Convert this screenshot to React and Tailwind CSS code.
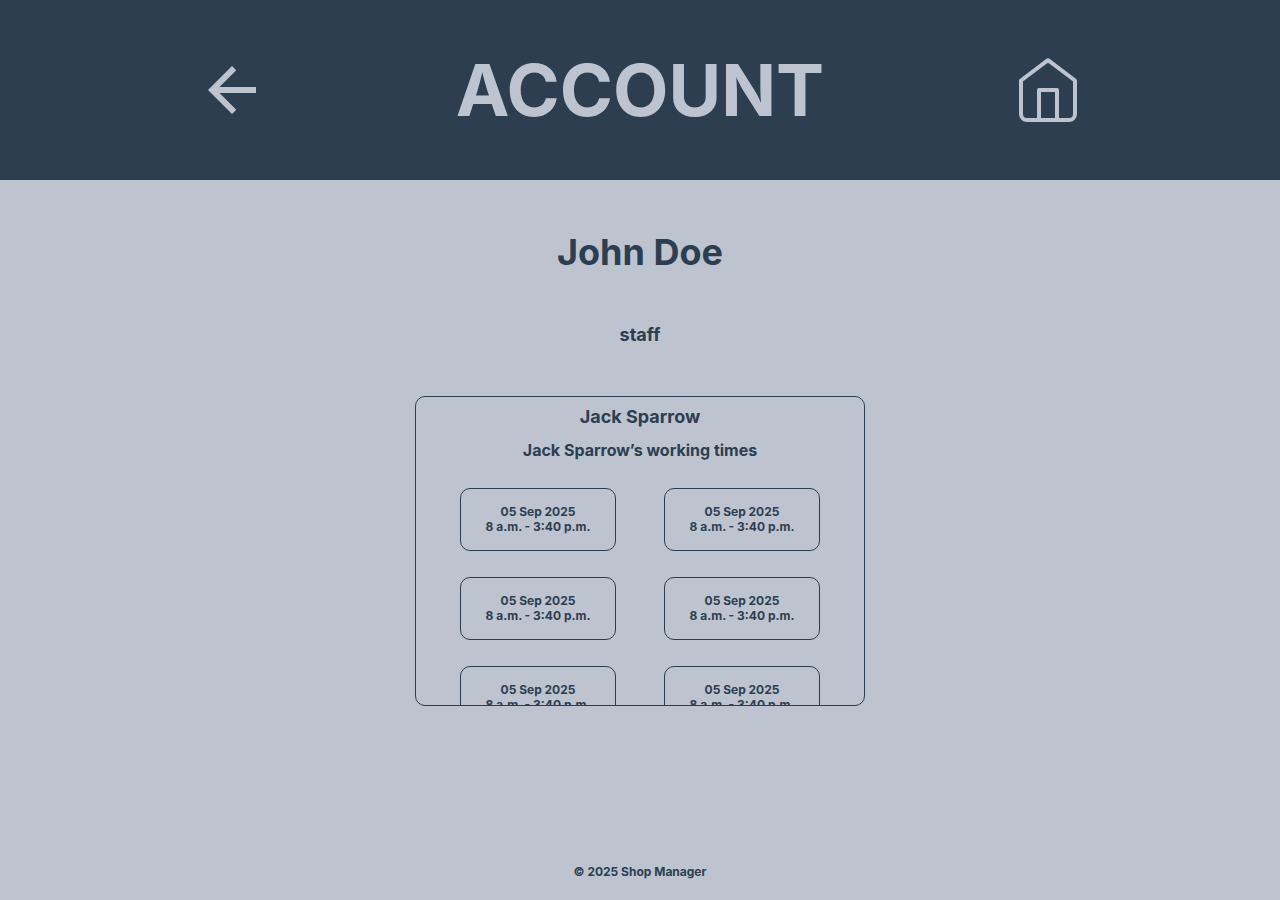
const shifts = Array.from({ length: 8 }, (_, id) => ({
  id,
  date: "05 Sep 2025",
  hours: "8 a.m. - 3:40 p.m.",
}));

function BackIcon() {
  return (
    <svg className="size-12" viewBox="0 0 48 48" fill="currentColor" aria-hidden="true">
      <path d="M48 21H11.5L28.25 4.25L24 0L0 24L24 48L28.25 43.75L11.5 27H48V21Z" />
    </svg>
  );
}

function HomeIcon() {
  return (
    <svg className="h-16 w-15" viewBox="0 0 60 64" fill="none" stroke="currentColor" strokeWidth="4" aria-hidden="true">
      <path
        d="M3 22.5L30 2.2L57 22.5V56A6 6 0 0 1 51 62H9A6 6 0 0 1 3 56Z"
        strokeLinejoin="round"
      />
      <path d="M21 62V32H39V62" strokeLinejoin="round" />
    </svg>
  );
}

function Header() {
  return (
    <header className="grid h-45 grid-cols-3 items-center justify-items-center bg-[#2c3e50] px-7 text-[#bdc3cf]">
      <a href="#back" aria-label="Back">
        <BackIcon />
      </a>
      <h1 className="text-7xl font-bold">ACCOUNT</h1>
      <a href="#home" aria-label="Home">
        <HomeIcon />
      </a>
    </header>
  );
}

function Shift({ date, hours }) {
  return (
    <li className="rounded-[10px] border border-[#2c3e50] pt-[15px] pb-4 text-center text-xs leading-[15px] font-bold">
      <p>{date}</p>
      <p>{hours}</p>
    </li>
  );
}

export default function App() {
  return (
    <div className="flex min-h-screen flex-col bg-[#bdc3cf] font-['Inter',sans-serif] text-[#2c3e50]">
      <Header />
      <main className="flex flex-1 flex-col items-center px-4">
        <h2 className="mt-12 text-4xl leading-12 font-bold">John Doe</h2>
        <p className="mt-12 text-lg leading-[22px] font-bold">staff</p>
        <section className="mt-[50px] h-[310px] w-full max-w-[450px] overflow-hidden rounded-[10px] border border-[#2c3e50] px-11 pt-2 text-center">
          <h3 className="text-lg leading-6 font-bold">Jack Sparrow</h3>
          <h4 className="mt-2 text-base leading-[26px] font-bold">Jack Sparrow’s working times</h4>
          <ul className="mt-[25px] grid grid-cols-2 gap-x-12 gap-y-[26px]">
            {shifts.map((shift) => (
              <Shift key={shift.id} date={shift.date} hours={shift.hours} />
            ))}
          </ul>
        </section>
      </main>
      <footer className="pb-5 text-center text-xs leading-4 font-bold">© 2025 Shop Manager</footer>
    </div>
  );
}
